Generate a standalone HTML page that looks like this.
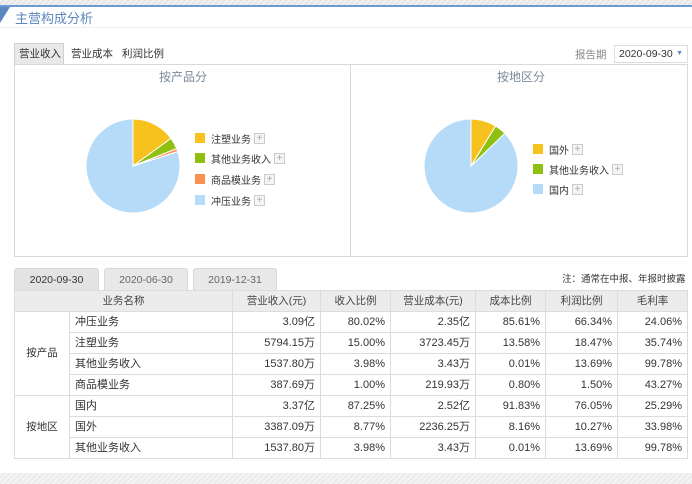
<!DOCTYPE html>
<html><head><meta charset="utf-8"><style>
*{margin:0;padding:0;box-sizing:border-box}
body{width:692px;height:484px;background:#fff;font-family:"Liberation Sans","Noto Sans CJK SC",sans-serif;font-size:12px;color:#333;position:relative;overflow:hidden}
.abs{position:absolute;white-space:nowrap}
.top{left:0;top:0;width:692px;height:5px;background:repeating-linear-gradient(135deg,#f2f2f2 0 2px,#e6e6e6 2px 4px)}
.bl{left:0;top:5px;width:692px;height:2px;background:#6b9bd1}
.title{left:15px;top:8px;font-size:13px;color:#5b87c0}
.tab{position:absolute;height:22px;line-height:22px;font-size:10.5px;color:#333}
.panel{left:14px;top:64px;width:674px;height:193px;border:1px solid #d9d9d9}
.ptitle{font-size:12px;color:#7a8a99}
.leg{position:absolute;display:flex;align-items:center;font-size:10px;color:#333;white-space:nowrap;height:12px}
.sq{width:10px;height:10px;margin-right:6px}
.plus{width:11px;height:11px;border:1px solid #ccc;background:#f4f4f4;color:#aaa;font-size:10px;line-height:9px;text-align:center;margin-left:3px}
.dt{position:absolute;top:268px;height:22px;line-height:22px;text-align:center;font-size:10.5px;color:#444;background:#e8e8e8;border:1px solid #d8d8d8;border-bottom:none;border-radius:3px 3px 0 0}
table{position:absolute;left:14px;top:290px;border-collapse:collapse;font-size:11px;table-layout:fixed}
td{border:1px solid #dcdcdc;height:21px;line-height:19px;padding:0 5px;white-space:nowrap;vertical-align:middle}
tr.h td{background:#ececec;text-align:center;color:#444;font-size:10.5px}
td.r{text-align:right}
td.c{text-align:center}
.bot{left:0;top:473px;width:692px;height:11px;background:repeating-linear-gradient(135deg,#f4f4f4 0 2px,#ebebeb 2px 4px)}
</style></head><body>
<div class="abs top"></div>
<div class="abs bl"></div>
<svg class="abs" style="left:0;top:7px" width="12" height="20"><polygon points="0,0 10,0 0,16" fill="#5b87c0"/></svg>
<div class="abs title">主营构成分析</div>
<div class="abs" style="left:0;top:27px;width:692px;height:1px;background:#eee"></div>
<div class="abs" style="left:14px;top:43px;width:50px;height:22px;background:#e9e9e9;border:1px solid #d0d0d0;border-bottom:none"></div>
<div class="tab" style="left:19px;top:43px">营业收入</div>
<div class="tab" style="left:71px;top:43px">营业成本</div>
<div class="tab" style="left:122px;top:43px">利润比例</div>
<div class="abs" style="left:575px;top:47px;font-size:10.5px;color:#888">报告期</div>
<div class="abs" style="left:614px;top:45px;width:74px;height:18px;border:1px solid #ddd;font-size:10.5px;line-height:16px;padding-left:4px">2020-09-30<span style="position:absolute;right:4px;top:0;color:#5b87c0;font-size:7px">▼</span></div>
<div class="abs panel"></div>
<div class="abs" style="left:350px;top:64px;width:1px;height:193px;background:#d9d9d9"></div>
<div class="abs ptitle" style="left:159px;top:68px">按产品分</div>
<div class="abs ptitle" style="left:497px;top:68px">按地区分</div>
<svg class="abs" style="left:0;top:0" width="692" height="260">
<g stroke="#fff" stroke-width="1">
<path d="M133,166 L177.7,151.5 A47,47 0 1 1 133,119 Z" fill="#b5dbf8"/>
<path d="M133,166 L133,119 A47,47 0 0 1 171,138.4 Z" fill="#f7c21e"/>
<path d="M133,166 L171,138.4 A47,47 0 0 1 176.7,148.6 Z" fill="#8fbf10"/>
<path d="M133,166 L176.7,148.6 A47,47 0 0 1 177.7,151.5 Z" fill="#fb8f4e"/>
<path d="M471,166 L504.8,133.3 A47,47 0 1 1 471,119 Z" fill="#b5dbf8"/>
<path d="M471,166 L471,119 A47,47 0 0 1 495.6,126 Z" fill="#f7c21e"/>
<path d="M471,166 L495.6,126 A47,47 0 0 1 504.8,133.3 Z" fill="#8fbf10"/>
</g></svg>
<div class="leg" style="left:195px;top:132px"><div class="sq" style="background:#f7c21e"></div>注塑业务<div class="plus">+</div></div>
<div class="leg" style="left:195px;top:152px"><div class="sq" style="background:#8fbf10"></div>其他业务收入<div class="plus">+</div></div>
<div class="leg" style="left:195px;top:173px"><div class="sq" style="background:#fb8f4e"></div>商品模业务<div class="plus">+</div></div>
<div class="leg" style="left:195px;top:194px"><div class="sq" style="background:#b5dbf8"></div>冲压业务<div class="plus">+</div></div>
<div class="leg" style="left:533px;top:143px"><div class="sq" style="background:#f7c21e"></div>国外<div class="plus">+</div></div>
<div class="leg" style="left:533px;top:163px"><div class="sq" style="background:#8fbf10"></div>其他业务收入<div class="plus">+</div></div>
<div class="leg" style="left:533px;top:183px"><div class="sq" style="background:#b5dbf8"></div>国内<div class="plus">+</div></div>
<div class="dt" style="left:14px;width:85px;background:#e3e3e3;color:#333">2020-09-30</div>
<div class="dt" style="left:104px;width:84px;color:#666">2020-06-30</div>
<div class="dt" style="left:193px;width:84px;color:#666">2019-12-31</div>
<div class="abs" style="left:562px;top:271px;font-size:9.5px;color:#333">注：通常在中报、年报时披露</div>
<table>
<colgroup><col style="width:55px"><col style="width:163px"><col style="width:88px"><col style="width:70px"><col style="width:85px"><col style="width:70px"><col style="width:72px"><col style="width:70px"></colgroup>
<tr class="h"><td colspan="2">业务名称</td><td>营业收入(元)</td><td>收入比例</td><td>营业成本(元)</td><td>成本比例</td><td>利润比例</td><td>毛利率</td></tr>
<tr><td rowspan="4" class="c" style="font-size:10.5px">按产品</td><td>冲压业务</td><td class="r">3.09亿</td><td class="r">80.02%</td><td class="r">2.35亿</td><td class="r">85.61%</td><td class="r">66.34%</td><td class="r">24.06%</td></tr>
<tr><td>注塑业务</td><td class="r">5794.15万</td><td class="r">15.00%</td><td class="r">3723.45万</td><td class="r">13.58%</td><td class="r">18.47%</td><td class="r">35.74%</td></tr>
<tr><td>其他业务收入</td><td class="r">1537.80万</td><td class="r">3.98%</td><td class="r">3.43万</td><td class="r">0.01%</td><td class="r">13.69%</td><td class="r">99.78%</td></tr>
<tr><td>商品模业务</td><td class="r">387.69万</td><td class="r">1.00%</td><td class="r">219.93万</td><td class="r">0.80%</td><td class="r">1.50%</td><td class="r">43.27%</td></tr>
<tr><td rowspan="3" class="c" style="font-size:10.5px">按地区</td><td>国内</td><td class="r">3.37亿</td><td class="r">87.25%</td><td class="r">2.52亿</td><td class="r">91.83%</td><td class="r">76.05%</td><td class="r">25.29%</td></tr>
<tr><td>国外</td><td class="r">3387.09万</td><td class="r">8.77%</td><td class="r">2236.25万</td><td class="r">8.16%</td><td class="r">10.27%</td><td class="r">33.98%</td></tr>
<tr><td>其他业务收入</td><td class="r">1537.80万</td><td class="r">3.98%</td><td class="r">3.43万</td><td class="r">0.01%</td><td class="r">13.69%</td><td class="r">99.78%</td></tr>
</table>
<div class="abs bot"></div>
</body></html>
